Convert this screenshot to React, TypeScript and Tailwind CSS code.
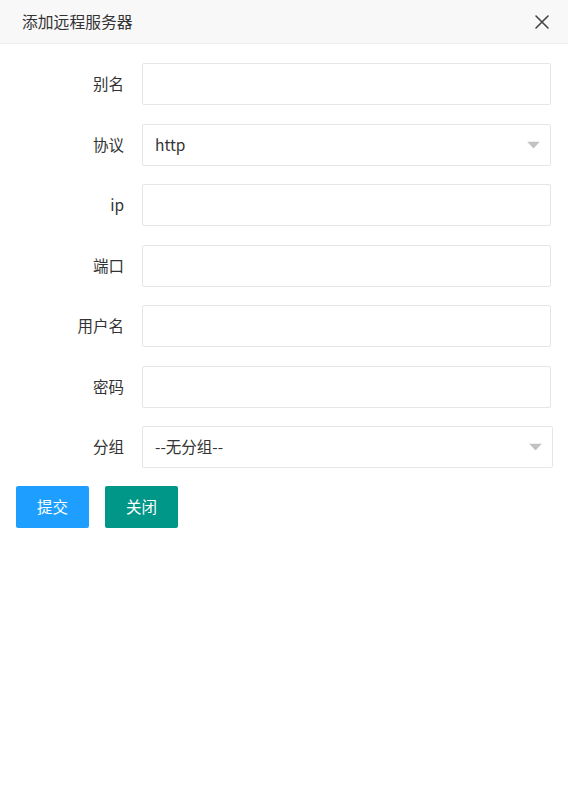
import React from "react";

const font = { fontFamily: '"Noto Sans CJK SC", "Noto Sans", sans-serif' };

function Arrow() {
  return (
    <svg width="13" height="7" viewBox="0 0 13 7" className="absolute right-[10px] top-1/2 -translate-y-1/2">
      <polygon points="0,0 13,0 6.5,7" fill="#c2c2c2" />
    </svg>
  );
}

function Row({ label, value, select, wide }: { label: string; value?: string; select?: boolean; wide?: boolean }) {
  return (
    <div className="flex items-center h-[42px]">
      <div className="w-[124px] text-right text-[15.5px] text-[#333]">{label}</div>
      <div
        className={`relative ml-[18px] h-[42px] ${wide ? "w-[411px]" : "w-[409px]"} border border-[#e6e6e6] rounded-[2px] bg-white flex items-center pl-[12px] text-[15.5px] text-[#333]`}
      >
        {value}
        {select && <Arrow />}
      </div>
    </div>
  );
}

export default function App() {
  return (
    <div className="w-[568px] h-[792px] bg-white" style={font}>
      <div className="h-[44px] bg-[#f8f8f8] border-b border-[#eeeeee] flex items-center justify-between pl-[22px] pr-[18px]">
        <span className="text-[15.8px] text-[#333]">添加远程服务器</span>
        <svg width="16" height="16" viewBox="0 0 16 16">
          <path d="M2 2 L14 14 M14 2 L2 14" stroke="#444" strokeWidth="1.6" strokeLinecap="round" />
        </svg>
      </div>
      <div className="pt-[19px] flex flex-col gap-[18.5px]">
        <Row label="别名" />
        <Row label="协议" value="http" select />
        <Row label="ip" />
        <Row label="端口" />
        <Row label="用户名" />
        <Row label="密码" />
        <Row label="分组" value="--无分组--" select wide />
        <div className="flex gap-[16px] pl-[16px] -mt-[0.5px]">
          <button className="w-[73px] h-[42px] rounded-[2px] bg-[#1E9FFF] text-white text-[15.5px]">提交</button>
          <button className="w-[73px] h-[42px] rounded-[2px] bg-[#009688] text-white text-[15.5px]">关闭</button>
        </div>
      </div>
    </div>
  );
}
